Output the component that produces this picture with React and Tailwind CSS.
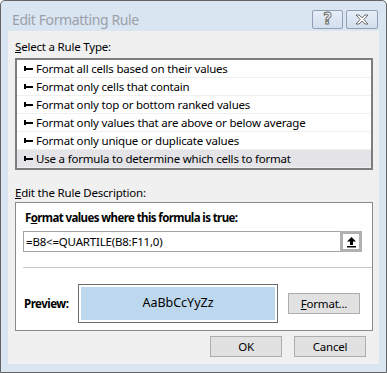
import React from "react";

const font = { fontFamily: '"Noto Sans", "Open Sans", sans-serif' };

function Arrow() {
  return (
    <svg width="9" height="7" viewBox="0 0 9 7" className="shrink-0">
      <rect x="0" y="1" width="2" height="5" fill="#000" />
      <rect x="0" y="3" width="9" height="2" fill="#000" />
    </svg>
  );
}

const rules = [
  "Format all cells based on their values",
  "Format only cells that contain",
  "Format only top or bottom ranked values",
  "Format only values that are above or below average",
  "Format only unique or duplicate values",
  "Use a formula to determine which cells to format",
];

export default function App() {
  return (
    <div
      className="w-[387px] h-[373px] bg-[#dae5f2] border border-[#646464] rounded-t-[5px] flex flex-col text-[11.5px] tracking-[-0.2px] text-black"
      style={font}
    >
      {/* title bar */}
      <div className="h-[30px] flex items-start shrink-0">
        <div className="ml-[11px] mt-[9px] text-[14px] leading-[20px] tracking-[-0.4px] text-[#9aa0a8]">Edit Formatting Rule</div>
        <div className="ml-auto mt-[9px] mr-[8px] flex gap-[3px]">
          <div className="w-[31px] h-[19px] rounded-[2px] border border-[#8fa0b6] bg-gradient-to-b from-[#e6eef8] to-[#d3dfed] flex items-center justify-center">
            <span className="text-[15px] leading-[15px] font-bold text-white [-webkit-text-stroke:1px_#6b6b6b]" style={{ fontFamily: '"DejaVu Sans", sans-serif' }}>?</span>
          </div>
          <div className="w-[32px] h-[19px] rounded-[2px] border border-[#8fa0b6] bg-gradient-to-b from-[#e6eef8] to-[#d3dfed] flex items-center justify-center">
            <svg width="16" height="11" viewBox="0 0 16 11">
              <path d="M2 1 L5 1 L8 3.8 L11 1 L14 1 L9.8 5.5 L14 10 L11 10 L8 7.2 L5 10 L2 10 L6.2 5.5 Z" fill="#fff" stroke="#6b6b6b" strokeWidth="1" strokeLinejoin="round" />
            </svg>
          </div>
        </div>
      </div>

      {/* client area */}
      <div className="ml-[7px] w-[371px] h-[333px] bg-[#f0f0f0] flex flex-col">
        <div className="ml-[7px] mt-[8px] h-[16px] leading-[16px]">
          <span className="underline">S</span>elect a Rule Type:
        </div>
        <div className="ml-[7px] mt-[3px] w-[358px] h-[112px] border-2 border-[#7d7d7d] bg-white flex flex-col">
          {rules.map((r, i) => (
            <div
              key={i}
              className={`h-[18px] flex items-center gap-[3px] pl-[7px] border-b border-[#f0f0f0] leading-[17px] ${i === 5 ? "bg-[#e4e4e8]" : ""}`}
            >
              <Arrow />
              <span>{r}</span>
            </div>
          ))}
        </div>

        <div className="ml-[7px] mt-[15px] h-[16px] leading-[16px]">
          <span className="underline">E</span>dit the Rule Description:
        </div>
        <div className="ml-[7px] mt-[1px] w-[358px] h-[129px] border border-[#8a8a8a] bg-white flex flex-col">
          <div className="ml-[9px] mt-[7px] h-[16px] leading-[16px] font-bold tracking-[-0.6px]">
            F<span className="underline">o</span>rmat values where this formula is true:
          </div>
          <div className="ml-[7px] mt-[5px] w-[339px] h-[21px] border border-[#a5a5a5] flex items-center">
            <div className="flex-1 pl-[2px] leading-[19px]">=B8&lt;=QUARTILE(B8:F11,0)</div>
            <div className="w-[22px] h-[21px] -mr-[1px] border-[3px] border-[#b0b0b0] bg-white flex items-center justify-center">
              <svg width="11" height="12" viewBox="0 0 11 12">
                <path d="M5.5 1 L10 5.5 L7 5.5 L7 9 L4 9 L4 5.5 L1 5.5 Z" fill="#000" />
                <rect x="1" y="10" width="9" height="1.5" fill="#000" />
              </svg>
            </div>
          </div>
          <div className="ml-[7px] mt-[15px] h-px bg-[#c9c9c9]" />
          <div className="mt-[16px] flex items-center">
            <div className="ml-[8px] w-[54px] font-bold tracking-[-0.5px]">Preview:</div>
            <div className="w-[200px] h-[39px] border border-[#6d6d6d] p-[2px]">
              <div className="w-full h-full bg-[#bdd7ee] flex items-center justify-center text-[12.5px] tracking-[0px]">
                AaBbCcYyZz
              </div>
            </div>
            <div className="ml-[10px] w-[72px] h-[21px] border border-[#adadad] bg-[#e1e1e1] flex items-center justify-center">
              <span><span className="underline">F</span>ormat...</span>
            </div>
          </div>
        </div>

        <div className="mt-[5px] flex justify-end gap-[12px] mr-[13px]">
          <div className="w-[72px] h-[21px] border border-[#adadad] bg-[#e1e1e1] flex items-center justify-center">OK</div>
          <div className="w-[72px] h-[21px] border border-[#adadad] bg-[#e1e1e1] flex items-center justify-center">Cancel</div>
        </div>
      </div>
    </div>
  );
}
